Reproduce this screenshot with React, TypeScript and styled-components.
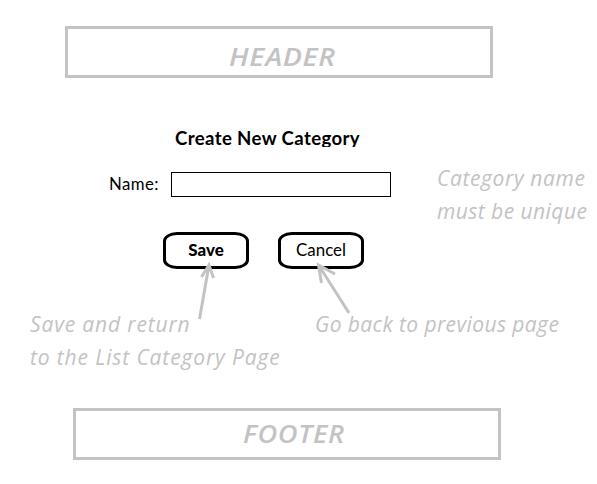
import React from "react";
import styled, { createGlobalStyle } from "styled-components";

const GlobalStyle = createGlobalStyle`
  * { box-sizing: border-box; }
  body { margin: 0; background: #fff; }
`;

const sketchGray = "#c3c3c3";

const Page = styled.div`
  width: 597px;
  height: 484px;
  overflow: hidden;
  display: flex;
  flex-direction: column;
  align-items: flex-start;
  padding-top: 26px;
  background: #fff;
  color: #000;
  font-family: Lato, "Liberation Sans", sans-serif;
`;

const Band = styled.div<{ $left: number; $textLeft: number; $lineHeight: number }>`
  flex: none;
  width: 428px;
  height: 52px;
  margin-left: ${(p) => p.$left}px;
  padding-left: ${(p) => p.$textLeft}px;
  border: 3px solid ${sketchGray};
  color: ${sketchGray};
  font: italic 600 25px/${(p) => p.$lineHeight}px "Open Sans", "Noto Sans", sans-serif;
  white-space: nowrap;
`;

const BandText = styled.span<{ $stretch: number }>`
  display: inline-block;
  letter-spacing: 0.6px;
  transform: scaleX(${(p) => p.$stretch});
  transform-origin: left;
`;

const Title = styled.h1`
  flex: none;
  height: 19px;
  margin: 50px 0 0 175px;
  overflow: hidden;
  font-size: 18.6px;
  font-weight: 700;
  line-height: 21px;
  letter-spacing: 0.38px;
  white-space: nowrap;
`;

const FormRow = styled.div`
  flex: none;
  display: flex;
  align-items: flex-start;
  height: 60px;
  margin-top: 15px;
  padding-left: 109px;
`;

const Label = styled.label`
  width: 62px;
  padding-top: 10px;
  font-size: 16.8px;
  line-height: 24px;
  letter-spacing: 0.4px;
`;

const NameInput = styled.input`
  width: 220px;
  height: 25px;
  margin: 10px 46px 0 0;
  padding: 0 4px;
  border: 1px solid #000;
  border-radius: 0;
  background: #fff;
  font: 16px Lato, sans-serif;
  outline: none;
`;

const Note = styled.p`
  margin: 0;
  color: ${sketchGray};
  font: italic 400 21px/33px "Open Sans", "Noto Sans", sans-serif;
  white-space: nowrap;
`;

const NoteLine = styled.span<{ $tracking?: number }>`
  display: block;
  letter-spacing: ${(p) => p.$tracking ?? 0}px;
`;

const Actions = styled.div`
  flex: none;
  display: flex;
  gap: 29px;
  padding-left: 163px;
  margin-top: 10px;
`;

const ActionSlot = styled.div`
  position: relative;
  width: 86px;
  height: 37px;
`;

const ActionButton = styled.button<{ $primary?: boolean }>`
  display: block;
  width: 86px;
  height: 37px;
  padding: 0 0 1px;
  border: 3px solid #000;
  border-radius: 14px / 9px;
  background: #fff;
  color: #000;
  font: ${(p) => (p.$primary ? 900 : 400)} 16.9px/30px Lato, sans-serif;
`;

const Arrow = styled.svg<{ $left: number }>`
  position: absolute;
  top: 30px;
  left: ${(p) => p.$left}px;
  fill: none;
  stroke: ${sketchGray};
  stroke-width: 3;
`;

const Notes = styled.div`
  flex: none;
  display: flex;
  height: 66px;
  margin-top: 39px;
  padding-left: 30px;
`;

const NoteColumn = styled.div<{ $width: number }>`
  flex: none;
  width: ${(p) => p.$width}px;
`;

const Spacer = styled.div`
  flex: none;
  height: 34px;
`;

export default function App() {
  return (
    <Page>
      <GlobalStyle />
      <Band as="header" $left={65} $textLeft={161} $lineHeight={54}>
        <BandText $stretch={1.14}>HEADER</BandText>
      </Band>
      <Title>Create New Category</Title>
      <FormRow>
        <Label htmlFor="name">Name:</Label>
        <NameInput id="name" />
        <Note>
          <NoteLine $tracking={0.62}>Category name</NoteLine>
          <NoteLine $tracking={0.45}>must be unique</NoteLine>
        </Note>
      </FormRow>
      <Actions>
        <ActionSlot>
          <ActionButton $primary>Save</ActionButton>
          <Arrow $left={34} width="22" height="60" viewBox="197 262 22 60">
            <path d="M199.5 319L209 265M201.5 277L209 265L213.5 278" />
          </Arrow>
        </ActionSlot>
        <ActionSlot>
          <ActionButton>Cancel</ActionButton>
          <Arrow $left={36} width="40" height="54" viewBox="314 262 40 54">
            <path d="M349 313L318.5 265M321.5 283L318.5 265L335 274" />
          </Arrow>
        </ActionSlot>
      </Actions>
      <Notes>
        <NoteColumn $width={285}>
          <Note>
            <NoteLine $tracking={0.85}>Save and return</NoteLine>
            <NoteLine $tracking={0.87}>to the List Category Page</NoteLine>
          </Note>
        </NoteColumn>
        <Note>
          <NoteLine $tracking={0.4}>Go back to previous page</NoteLine>
        </Note>
      </Notes>
      <Spacer />
      <Band as="footer" $left={73} $textLeft={167} $lineHeight={45}>
        <BandText $stretch={1.09}>FOOTER</BandText>
      </Band>
    </Page>
  );
}
